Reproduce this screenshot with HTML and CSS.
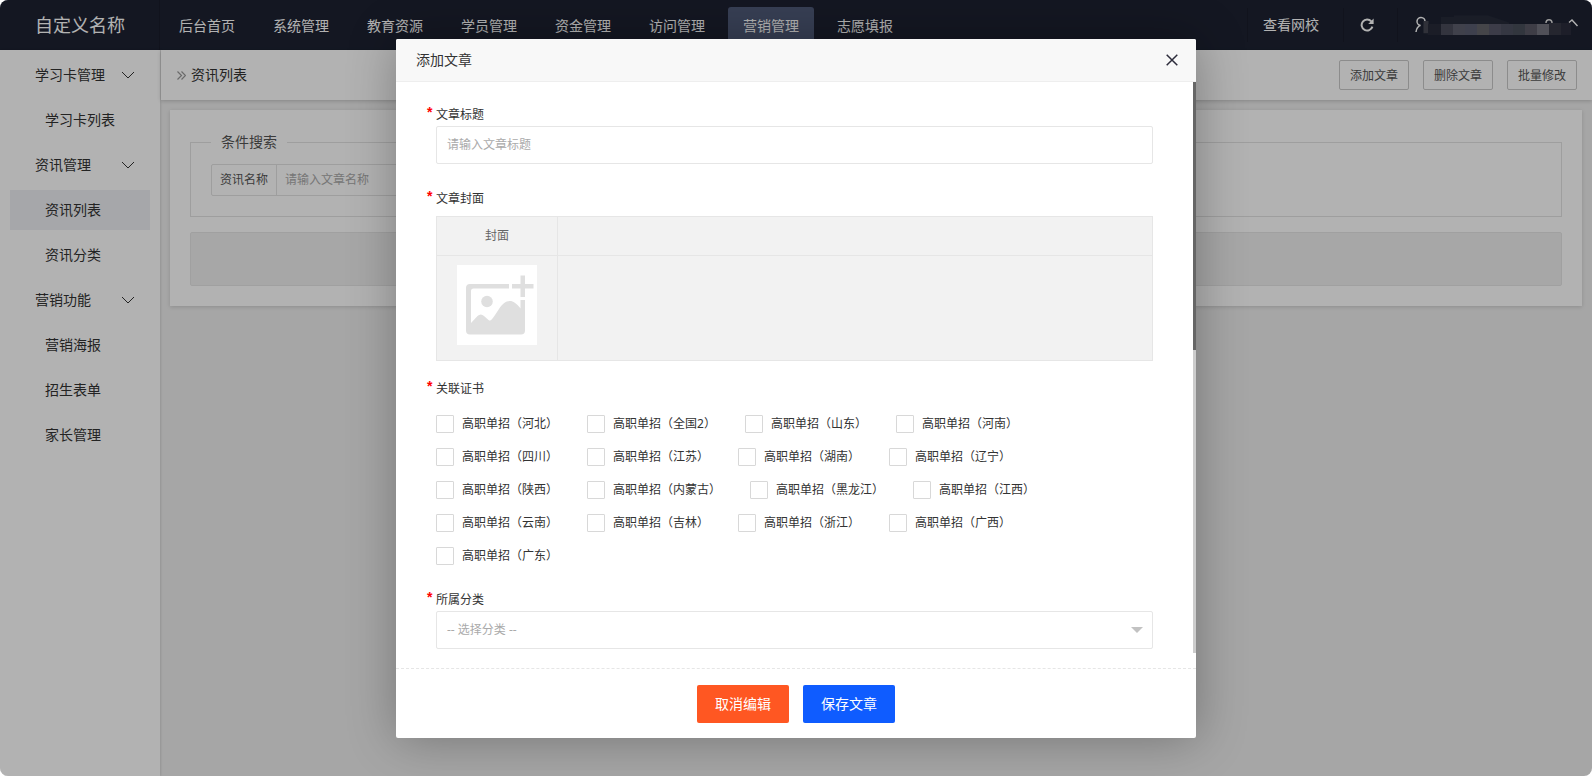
FILE: index.html
```html
<!DOCTYPE html>
<html lang="zh-CN">
<head>
<meta charset="utf-8">
<title>添加文章</title>
<link rel="stylesheet" href="styles.css">
</head>
<body>
<div class="app">
  <header class="topbar">
    <div class="logo">自定义名称</div>
    <nav class="nav">
      <a href="#">后台首页</a>
      <a href="#">系统管理</a>
      <a href="#">教育资源</a>
      <a href="#">学员管理</a>
      <a href="#">资金管理</a>
      <a href="#">访问管理</a>
      <a href="#" class="active">营销管理</a>
      <a href="#">志愿填报</a>
    </nav>
    <div class="tools">
      <a href="#" class="tool site">查看网校</a>
      <button type="button" class="tool refresh" aria-label="刷新">
        <svg width="14" height="14" viewBox="0 0 14 14"><path d="M11.3 3.4A5.5 5.5 0 1 0 12.4 8.6" fill="none" stroke="#fff" stroke-width="2"/><path d="M13.6 .6V6H8.2z" fill="#fff"/></svg>
      </button>
      <button type="button" class="tool user" aria-label="账户">
        <svg width="166" height="24" viewBox="0 0 166 24">
          <path d="M1 19c.4-3.400 1.800-5.600 4.600-6.600M5.600 12.400a4 4 0 1 1 4.400-4" fill="none" stroke="#fff" stroke-width="1.500"/>
          <path d="M26 4h13v-1.500h34l9 3 12 4v2.500H8.500v9l5 .5h12.500z" fill="#262a39"/>
          <path d="M8.500 8h5v12h-5z" fill="#454752"/>
          <path d="M13 11h13v11H13z" fill="#272a39"/>
          <path d="M26 11h12v11H26z" fill="#494b5a"/>
          <path d="M38 11h12v11H38z" fill="#5c5e6c"/>
          <path d="M50 11h12v11H50z" fill="#5a5c6f"/>
          <path d="M62 11h12v11H62z" fill="#636469"/>
          <path d="M74 11h12v11H74z" fill="#565768"/>
          <path d="M86 11h12v11H86z" fill="#4d505f"/>
          <path d="M98 11h12v11H98z" fill="#484e5a"/>
          <path d="M110 11h12v11h-12z" fill="#595865"/>
          <path d="M122 11h12v11h-12z" fill="#73737f"/>
          <path d="M134 10h12v12h-12z" fill="#363744"/>
          <path d="M146 10h10v12h-10z" fill="#2a2c3b"/>
          <path d="M131 10c0-4.500 6-4.500 6 0" fill="none" stroke="#ddd" stroke-width="1.500"/>
          <path d="M154 9.500l3-2.500 5.500 6" fill="none" stroke="#fff" stroke-width="1.400"/>
        </svg>
      </button>
    </div>
  </header>

  <div class="shell">
    <nav class="side">
      <a href="#" class="group">学习卡管理<svg width="14" height="8" viewBox="0 0 14 8"><path d="M1 1l6 6 6-6"/></svg></a>
      <a href="#">学习卡列表</a>
      <a href="#" class="group">资讯管理<svg width="14" height="8" viewBox="0 0 14 8"><path d="M1 1l6 6 6-6"/></svg></a>
      <a href="#" class="current">资讯列表</a>
      <a href="#">资讯分类</a>
      <a href="#" class="group">营销功能<svg width="14" height="8" viewBox="0 0 14 8"><path d="M1 1l6 6 6-6"/></svg></a>
      <a href="#">营销海报</a>
      <a href="#">招生表单</a>
      <a href="#">家长管理</a>
    </nav>

    <main class="main">
      <div class="crumbs">
        <svg width="9" height="9" viewBox="0 0 9 9"><path d="M.5.5l4 4-4 4M4.500.5l4 4-4 4" fill="none" stroke="#999" stroke-width="1.200"/></svg>
        <span class="crumb">资讯列表</span>
        <div class="actions">
          <button type="button">添加文章</button>
          <button type="button">删除文章</button>
          <button type="button">批量修改</button>
        </div>
      </div>
      <section class="card">
        <fieldset class="search">
          <legend>条件搜索</legend>
          <div class="search-group">
            <label for="q">资讯名称</label>
            <input id="q" type="text" placeholder="请输入文章名称">
          </div>
        </fieldset>
        <div class="table-tools"></div>
      </section>
    </main>
  </div>

  <div class="shade">
    <div class="modal" role="dialog" aria-labelledby="modal-title">
      <div class="modal-head">
        <span id="modal-title">添加文章</span>
        <button type="button" class="close" aria-label="关闭">
          <svg width="12" height="12" viewBox="0 0 12 12"><path d="M.7.700l10.600 10.600M11.300.700L.700 11.300" stroke="#2d2c3b" stroke-width="1.500"/></svg>
        </button>
      </div>
      <form class="modal-body">
        <div class="scroll"><div class="thumb"></div></div>
        <div class="field">
          <label class="name" for="title">文章标题</label>
          <input id="title" class="control" type="text" placeholder="请输入文章标题">
        </div>
        <div class="field field-cover">
          <div class="name">文章封面</div>
          <table class="cover">
            <thead><tr><th>封面</th><th></th></tr></thead>
            <tbody><tr>
              <td>
                <button type="button" class="upload" aria-label="上传封面">
                  <svg width="80" height="80" viewBox="0 0 80 80">
                    <path d="M52 19H13a4 4 0 0 0-4 4v42.500a4 4 0 0 0 4 4h51a4 4 0 0 0 4-4V35h-4.500v8.500C60 38.500 56 36 53 36c-4.500 0-8 3.500-11 8l-5 7.500c-2 3-3.500 5-5.500 3.500L27 51c-2-2-4.500-2-6.500 0L14 58V26q0-2.500 2.500-2.500H52z" fill="#dfdfdf"/>
                    <circle cx="30" cy="36.500" r="5.800" fill="#dfdfdf"/>
                    <path d="M63.500 10.500H68V19h8.500v4.500H68V32h-4.500v-8.500H55V19h8.500z" fill="#dfdfdf"/>
                  </svg>
                </button>
              </td>
              <td></td>
            </tr></tbody>
          </table>
        </div>
        <div class="field field-certs">
          <div class="name">关联证书</div>
          <div class="checks">
            <label><input type="checkbox">高职单招（河北）</label>
            <label><input type="checkbox">高职单招（全国2）</label>
            <label><input type="checkbox">高职单招（山东）</label>
            <label><input type="checkbox">高职单招（河南）</label>
            <label><input type="checkbox">高职单招（四川）</label>
            <label><input type="checkbox">高职单招（江苏）</label>
            <label><input type="checkbox">高职单招（湖南）</label>
            <label><input type="checkbox">高职单招（辽宁）</label>
            <label><input type="checkbox">高职单招（陕西）</label>
            <label><input type="checkbox">高职单招（内蒙古）</label>
            <label><input type="checkbox">高职单招（黑龙江）</label>
            <label><input type="checkbox">高职单招（江西）</label>
            <label><input type="checkbox">高职单招（云南）</label>
            <label><input type="checkbox">高职单招（吉林）</label>
            <label><input type="checkbox">高职单招（浙江）</label>
            <label><input type="checkbox">高职单招（广西）</label>
            <label><input type="checkbox">高职单招（广东）</label>
          </div>
        </div>
        <div class="field">
          <label class="name" for="category">所属分类</label>
          <div class="select">
            <select id="category" class="control"><option>-- 选择分类 --</option></select>
          </div>
        </div>
      </form>
      <div class="modal-foot">
        <button type="button" class="cancel">取消编辑</button>
        <button type="button" class="save">保存文章</button>
      </div>
    </div>
  </div>
</div>
</body>
</html>
```
FILE: styles.css
```css
* { box-sizing: border-box; }
body {
  margin: 0;
  background: #fff;
  color: #333;
  font: 14px/20px "Noto Sans", "Noto Sans CJK SC", sans-serif;
}
a { color: inherit; text-decoration: none; }
button, input, select { font: inherit; color: inherit; margin: 0; }
button { cursor: pointer; }
svg { display: block; flex: none; }

.app {
  position: relative;
  min-height: 100vh;
  display: flex;
  flex-direction: column;
  border-radius: 8px;
  overflow: hidden;
  background: #eee;
}

/* top bar */
.topbar { display: flex; height: 50px; background: #1d2232; color: #fff; }
.logo {
  width: 160px;
  padding-left: 35px;
  border-right: 1px solid #191c2a;
  font-size: 18px;
  line-height: 50px;
}
.nav { display: flex; gap: 8px; padding: 7px 0 0 4px; }
.nav a { padding: 0 15px; line-height: 38px; border-radius: 3px 3px 0 0; }
.nav .active { background: #505b79; }
.tools { display: flex; align-items: center; margin-left: auto; }
.tool {
  display: flex;
  align-items: center;
  height: 34px;
  padding: 0;
  border: 0;
  border-left: 1px solid #191c2a;
  background: none;
}
.site { width: 96px; padding-left: 15px; }
.refresh { width: 54px; justify-content: center; padding-right: 8px; }
.user { padding: 0 11px 0 17px; }

/* side menu */
.shell { display: flex; flex: 1; }
.side {
  width: 160px;
  padding: 5px 10px;
  display: flex;
  flex-direction: column;
  gap: 5px;
  background: #fff;
  box-shadow: 0 0 3px rgba(0, 0, 0, .2);
}
.side a { padding-left: 35px; line-height: 40px; }
.side .group {
  display: flex;
  align-items: center;
  justify-content: space-between;
  padding: 0 15px 0 25px;
}
.side .group path { fill: none; stroke: #333; stroke-width: 1; }
.side .current { background: #eef0f4; }

/* page */
.main { flex: 1; min-width: 0; }
.crumbs {
  display: flex;
  align-items: center;
  gap: 5px;
  height: 50px;
  margin-left: 1px;
  padding: 0 15px 0 16px;
  background: #fff;
  box-shadow: 0 1px 4px rgba(0, 0, 0, .2);
}
.actions { display: flex; gap: 14px; margin-left: auto; }
.actions button {
  height: 30px;
  padding: 2px 10px 0;
  border: 1px solid #c9c9c9;
  border-radius: 2px;
  background: #fff;
  color: #555;
  font-size: 12px;
}
.card {
  margin: 10px;
  padding: 20px;
  background: #fff;
  box-shadow: 0 1px 4px rgba(0, 0, 0, .15);
}
.search {
  margin: 0 0 15px;
  padding: 10px 20px 20px;
  border: 1px solid #e2e2e2;
  color: #555;
}
.search legend { padding: 0 10px; line-height: 24px; }
.search-group {
  display: flex;
  width: 300px;
  border: 1px solid #e2e2e2;
  border-radius: 2px;
  font-size: 12px;
}
.search-group label { width: 65px; line-height: 30px; text-align: center; border-right: 1px solid #e2e2e2; }
.search-group input { flex: 1; min-width: 0; padding: 0 8px; border: 0; background: none; }
::placeholder { color: #aaa; opacity: 1; }
.table-tools { height: 54px; border: 1px solid #e6e6e6; border-radius: 2px; background: #f0f0f0; }

/* dialog */
.shade {
  position: absolute;
  inset: 0;
  display: flex;
  align-items: center;
  justify-content: center;
  background: rgba(0, 0, 0, .3);
}
.modal {
  width: 800px;
  max-width: 100%;
  border-radius: 2px;
  background: #fff;
  box-shadow: 1px 1px 50px rgba(0, 0, 0, .3);
}
.modal-head {
  display: flex;
  align-items: center;
  justify-content: space-between;
  height: 43px;
  padding: 0 18px 0 20px;
  border-bottom: 1px solid #eee;
  border-radius: 2px 2px 0 0;
  background: #f8f8f8;
}
.close { padding: 0; border: 0; background: none; }
.modal-body {
  position: relative;
  padding: 23px 43px 19px 40px;
  font-size: 12px;
}
.scroll { position: absolute; top: 0; right: 0; bottom: 15px; width: 3px; background: #ccc; }
.thumb { height: 47%; background: #666; }
.field { margin-top: 25px; }
.field:nth-child(2) { margin-top: 0; }
.field-certs { margin-top: 18px; }
.name { display: block; position: relative; margin-bottom: 1px; }
.name::before {
  content: "*";
  position: absolute;
  left: -9px;
  top: -3px;
  color: #f00;
  font-family: "Liberation Sans", sans-serif;
  font-weight: 700;
  font-size: 14px;
}
.control {
  display: block;
  width: 100%;
  height: 38px;
  padding: 0 10px;
  border: 1px solid #e6e6e6;
  border-radius: 2px;
  background: #fff;
}
.select { position: relative; }
.select .control { appearance: none; color: #aaa; }
.select::after {
  content: "";
  position: absolute;
  right: 10px;
  top: 16px;
  border: 6px solid transparent;
  border-top-color: #c2c2c2;
  pointer-events: none;
}
.cover {
  width: 100%;
  margin-top: 7px;
  border-collapse: collapse;
  background: #f2f2f2;
  color: #666;
}
.cover th, .cover td { padding: 9px 20px; border: 1px solid #e6e6e6; font-weight: 400; }
.cover th:first-child { width: 121px; }
.cover td { padding-bottom: 15px; }
.upload { display: block; padding: 0; border: 0; background: #fff; }
.checks { display: flex; flex-wrap: wrap; gap: 15px 29px; padding-top: 15px; }
.checks label { display: flex; align-items: center; gap: 8px; height: 18px; }
.checks input {
  appearance: none;
  width: 18px;
  height: 18px;
  border: 1px solid #d8d8d8;
  border-radius: 1px;
  background: #fff;
}
.modal-foot {
  display: flex;
  justify-content: center;
  gap: 14px;
  padding: 16px 0 15px;
  border-top: 1px dashed #e6e6e6;
}
.modal-foot button { height: 38px; padding: 0 18px; border: 0; border-radius: 2px; color: #fff; }
.cancel { background: #ff5722; }
.save { background: #0f5cff; }
```
